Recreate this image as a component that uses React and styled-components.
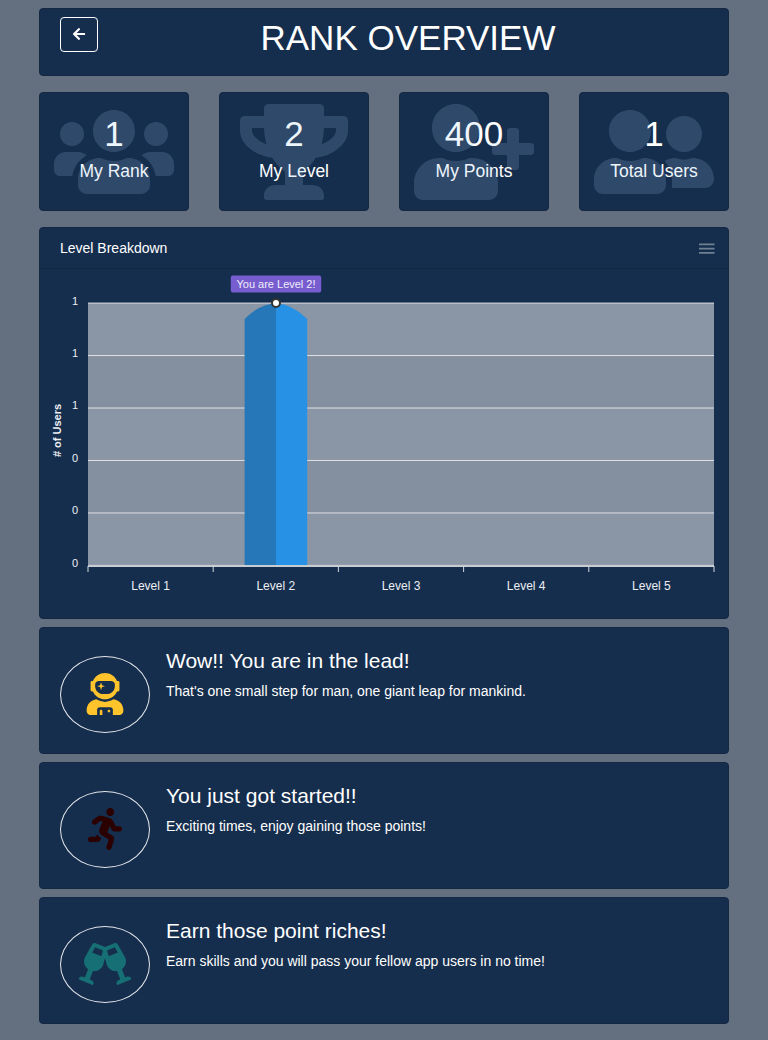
import React from "react";
import styled, { createGlobalStyle } from "styled-components";
import {
  FaArrowLeft,
  FaGlassCheers,
  FaRunning,
  FaTrophy,
  FaUserAstronaut,
  FaUserFriends,
  FaUserPlus,
  FaUsers,
} from "react-icons/fa";

const GlobalStyle = createGlobalStyle`
  * { box-sizing: border-box; }
  body {
    margin: 0;
    background: #646f7f;
    color: #fff;
    font: 14px/21px "Liberation Sans", Arial, sans-serif;
  }
`;

const Page = styled.main`
  width: 690px;
  height: 1040px;
  margin: 0 auto;
  padding-top: 8px;
`;

const Card = styled.section`
  background: #162e4d;
  border: 1px solid #142844;
  border-radius: 4px;
`;

const Header = styled(Card)`
  display: flex;
  height: 68px;
  padding: 8px 20px;
`;

const BackButton = styled.button`
  display: grid;
  place-items: center;
  width: 38px;
  height: 35px;
  padding: 0 0 2px;
  color: #fff;
  font-size: 14px;
  background: transparent;
  border: 1px solid #fff;
  border-radius: 4px;
`;

const Title = styled.h1`
  flex: 1;
  margin: 0 0 0 10px;
  font-size: 35px;
  font-weight: 400;
  line-height: 42px;
  text-align: center;
`;

const Stats = styled.div`
  display: grid;
  grid-template-columns: repeat(4, 150px);
  gap: 30px;
  margin: 16px 0;
`;

const StatCard = styled(Card)`
  display: grid;
  place-items: center;
  height: 119px;
  padding-top: 1px;

  > * { grid-area: 1 / 1; }
  > svg {
    width: ${(p) => p.$iconWidth}px;
    height: 96px;
    color: rgba(161, 200, 238, 0.18);
  }
`;

const StatText = styled.div`
  padding-bottom: 10px;
  text-align: center;
`;

const StatValue = styled.div`
  font-size: 35px;
  line-height: 42px;
`;

const StatLabel = styled.div`
  margin-top: 6px;
  font-size: 17.5px;
  line-height: 21px;
`;

const ChartCard = styled(Card)`
  height: 392px;
`;

const ChartHeader = styled.div`
  display: flex;
  align-items: center;
  justify-content: space-between;
  height: 41px;
  padding: 0 13px 0 20px;
  border-bottom: 1px solid #142844;
`;

const Chart = styled.svg`
  display: block;
  font-family: "Liberation Sans", Arial, sans-serif;
`;

const Achievement = styled(Card)`
  display: flex;
  gap: 16px;
  height: 127px;
  margin-top: 8px;
  padding: 20px;
`;

const Medal = styled.div`
  display: grid;
  place-items: center;
  width: 90px;
  height: 77px;
  margin-top: 8px;
  padding-bottom: 1px;
  border: 1px solid #e3e6ea;
  border-radius: 50%;
  color: ${(p) => p.$color};

  svg {
    width: 54px;
    height: 42px;
  }
`;

const AchievementTitle = styled.h2`
  margin: 0 0 8px;
  font-size: 21px;
  font-weight: 400;
  line-height: 25px;
`;

const AchievementText = styled.p`
  margin: 0;
`;

const stats = [
  { value: 1, label: "My Rank", Icon: FaUsers, iconWidth: 120 },
  { value: 2, label: "My Level", Icon: FaTrophy, iconWidth: 108 },
  { value: 400, label: "My Points", Icon: FaUserPlus, iconWidth: 120 },
  { value: 1, label: "Total Users", Icon: FaUserFriends, iconWidth: 120 },
];

const achievements = [
  {
    title: "Wow!! You are in the lead!",
    text: "That's one small step for man, one giant leap for mankind.",
    color: "#ffc42b",
    Icon: FaUserAstronaut,
  },
  {
    title: "You just got started!!",
    text: "Exciting times, enjoy gaining those points!",
    color: "#2b0000",
    Icon: FaRunning,
  },
  {
    title: "Earn those point riches!",
    text: "Earn skills and you will pass your fellow app users in no time!",
    color: "#166f74",
    Icon: FaGlassCheers,
  },
];

const yLabels = [1, 1, 1, 0, 0, 0];
const left = 48;
const right = 674;
const top = 34.1;
const axis = 297;
const band = 52.46;
const column = (right - left) / 5;

function LevelChart() {
  return (
    <Chart width="688" height="348" viewBox="0 0 688 348">
      {[0, 1, 2, 3, 4].map((i) => (
        <rect
          key={i}
          x={left}
          y={top + i * band}
          width={right - left}
          height={band}
          fill={i % 2 ? "#8490a0" : "#8a96a6"}
        />
      ))}
      {yLabels.map((label, i) => (
        <g key={i}>
          <line x1={left} x2={right} y1={top + i * band} y2={top + i * band} stroke="#e0e2e5" />
          <text
            x="38"
            y={36 + Math.floor(i * band)}
            fontSize="11"
            fill="#eceff3"
            textAnchor="end"
          >
            {label}
          </text>
        </g>
      ))}
      <path d="M204.6 297V50Q220.3 34.5 236 34.5V297Z" fill="#2577b7" />
      <path d="M236 297V34.5Q251.5 34.5 267.2 50V297Z" fill="#2691e5" />
      <line x1={left} x2={right} y1={axis} y2={axis} stroke="#c8ccd1" strokeWidth="2" />
      {[0, 1, 2, 3, 4, 5].map((i) => (
        <line
          key={i}
          x1={left + i * column}
          x2={left + i * column}
          y1={axis}
          y2={axis + 6}
          stroke="#d3d8de"
        />
      ))}
      {[1, 2, 3, 4, 5].map((level, i) => (
        <text
          key={level}
          x={left + (i + 0.5) * column}
          y="321"
          fontSize="12"
          fill="#eceff3"
          textAnchor="middle"
        >
          Level {level}
        </text>
      ))}
      <text
        transform="translate(21 161.5) rotate(-90)"
        fontSize="11"
        fontWeight="700"
        fill="#eceff3"
        textAnchor="middle"
      >
        # of Users
      </text>
      <rect x="190.8" y="6.4" width="90.4" height="17.2" rx="2" fill="#775dd0" />
      <text x="236" y="19" fontSize="11" fill="#f1eefb" textAnchor="middle">
        You are Level 2!
      </text>
      <circle cx="236" cy="34" r="4" fill="#fff" stroke="#333" strokeWidth="2" />
    </Chart>
  );
}

export default function App() {
  return (
    <>
      <GlobalStyle />
      <Page>
        <Header>
          <BackButton aria-label="Back">
            <FaArrowLeft />
          </BackButton>
          <Title>RANK OVERVIEW</Title>
        </Header>
        <Stats>
          {stats.map(({ value, label, Icon, iconWidth }) => (
            <StatCard key={label} $iconWidth={iconWidth}>
              <StatText>
                <StatValue>{value}</StatValue>
                <StatLabel>{label}</StatLabel>
              </StatText>
              <Icon />
            </StatCard>
          ))}
        </Stats>
        <ChartCard>
          <ChartHeader>
            Level Breakdown
            <svg width="16" height="12" viewBox="0 0 16 12" fill="#6e8192">
              <path d="M0 1.5h15.5v1.8H0zM0 5.7h15.5v1.8H0zM0 9.9h15.5v1.8H0z" />
            </svg>
          </ChartHeader>
          <LevelChart />
        </ChartCard>
        {achievements.map(({ title, text, color, Icon }) => (
          <Achievement key={title}>
            <Medal $color={color}>
              <Icon />
            </Medal>
            <div>
              <AchievementTitle>{title}</AchievementTitle>
              <AchievementText>{text}</AchievementText>
            </div>
          </Achievement>
        ))}
      </Page>
    </>
  );
}
